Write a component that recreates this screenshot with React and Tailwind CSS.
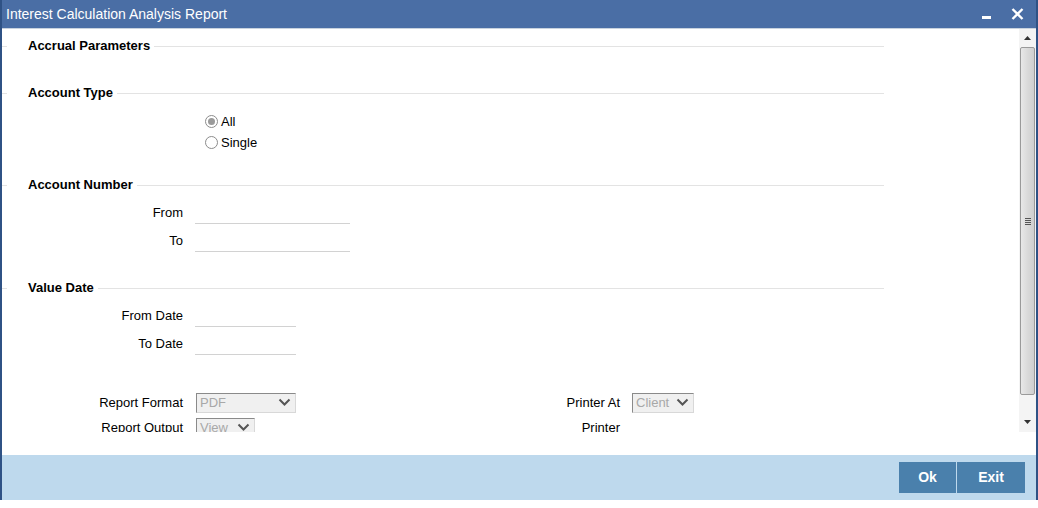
import { Fragment } from "react";

function Legend({ title }) {
  return (
    <div className="flex h-[20px] w-[882px] items-center">
      <div className="w-[5px] border-t border-[#e3e3e3]" />
      <span className="ml-[21px] pr-[4px] text-[13px] font-bold text-black">{title}</span>
      <div className="flex-1 border-t border-[#e3e3e3]" />
    </div>
  );
}

function TextRow({ label, width }) {
  return (
    <div className="flex h-[28px] items-center">
      <div className="w-[181px] text-right text-[13px] text-black">{label}</div>
      <div className={`ml-[12px] h-[22px] border-b border-[#d2d2d2] ${width}`} />
    </div>
  );
}

function Select({ value, width }) {
  return (
    <div
      className={`flex h-[20px] items-center justify-between border border-t-[#8a8a8a] border-l-[#8a8a8a] border-r-[#d8d8d8] border-b-[#d8d8d8] bg-[#f0f0f0] pl-[3px] pr-[4px] ${width}`}
    >
      <span className="text-[13px] leading-none text-[#a8a8a8]">{value}</span>
      <svg width="13" height="9" viewBox="0 0 13 9">
        <path d="M1.5 1.5 L6.5 6.5 L11.5 1.5" fill="none" stroke="#555" strokeWidth="2" />
      </svg>
    </div>
  );
}

function Radio({ checked, label }) {
  return (
    <div className="flex h-[21px] items-center pl-[203px]">
      <span className="flex h-[13px] w-[13px] items-center justify-center rounded-full border border-[#8c8c8c] bg-white">
        {checked && <span className="h-[7px] w-[7px] rounded-full bg-[#9a9a9a]" />}
      </span>
      <span className="ml-[3px] text-[13px] text-black">{label}</span>
    </div>
  );
}

export default function App() {
  return (
    <div className="h-[508px] w-[1038px] bg-white font-['Liberation_Sans',Arial,sans-serif]">
      <div className="flex h-[500px] flex-col border-x-2 border-[#2f5285] bg-white">
        {/* title bar */}
        <div className="flex h-[28px] items-center justify-between bg-[#4a6ea5] pl-[4px] pr-[12px]">
          <span className="text-[14px] text-white">Interest Calculation Analysis Report</span>
          <div className="flex items-center gap-[20px]">
            <span className="mt-[6px] h-[3px] w-[9px] bg-white" />
            <svg width="13" height="12" viewBox="0 0 13 12">
              <path d="M1.5 1 L11.5 11 M11.5 1 L1.5 11" stroke="white" strokeWidth="2.4" />
            </svg>
          </div>
        </div>
        <div className="h-px bg-[#c8d2de]" />

        {/* content */}
        <div className="flex h-[403px] overflow-hidden">
          <div className="flex-1 pt-[7px]">
            <Legend title="Accrual Parameters" />
            <div className="mt-[27px]">
              <Legend title="Account Type" />
            </div>
            <div className="mt-[8px]">
              <Radio checked label="All" />
              <Radio label="Single" />
            </div>
            <div className="mt-[22px]">
              <Legend title="Account Number" />
            </div>
            <div className="mt-[4px]">
              <TextRow label="From" width="w-[155px]" />
              <TextRow label="To" width="w-[155px]" />
            </div>
            <div className="mt-[23px]">
              <Legend title="Value Date" />
            </div>
            <div className="mt-[4px]">
              <TextRow label="From Date" width="w-[101px]" />
              <TextRow label="To Date" width="w-[101px]" />
            </div>
            <div className="mt-[32px] grid grid-cols-[448px_1fr]">
              {[
                ["Report Format", "PDF", "w-[100px]", "Printer At", "Client", "w-[62px]"],
                ["Report Output", "View", "w-[59px]", "Printer", null, ""],
              ].map(([l1, v1, w1, l2, v2, w2]) => (
                <Fragment key={l1}>
                  <div className="flex h-[25px] items-center">
                    <div className="w-[181px] text-right text-[13px] text-black">{l1}</div>
                    <div className="ml-[13px]">
                      <Select value={v1} width={w1} />
                    </div>
                  </div>
                  <div className="flex h-[25px] items-center">
                    <div className="w-[170px] text-right text-[13px] text-black">{l2}</div>
                    {v2 && (
                      <div className="ml-[12px]">
                        <Select value={v2} width={w2} />
                      </div>
                    )}
                  </div>
                </Fragment>
              ))}
            </div>
          </div>

          {/* scrollbar */}
          <div className="flex w-[17px] flex-col items-center bg-[#f4f4f4] pt-[2px] pb-[3px]">
            <div className="flex h-[14px] items-center justify-center">
              <svg width="7" height="4" viewBox="0 0 7 4">
                <path d="M0 4 L3.5 0 L7 4 Z" fill="#333" />
              </svg>
            </div>
            <div className="mt-[2px] flex h-[348px] w-[15px] items-center justify-center rounded-[2px] border border-[#9a9a9a] bg-gradient-to-r from-[#e8e8e8] via-[#dadada] to-[#cfcfcf]">
              <div className="flex flex-col gap-[1px]">
                <span className="h-px w-[6px] bg-[#555]" />
                <span className="h-px w-[6px] bg-[#555]" />
                <span className="h-px w-[6px] bg-[#555]" />
                <span className="h-px w-[6px] bg-[#555]" />
              </div>
            </div>
            <div className="flex-1" />
            <div className="flex h-[14px] items-center justify-center">
              <svg width="7" height="4" viewBox="0 0 7 4">
                <path d="M0 0 L3.5 4 L7 0 Z" fill="#333" />
              </svg>
            </div>
          </div>
        </div>

        <div className="h-[23px]" />

        {/* footer */}
        <div className="flex flex-1 items-center justify-end bg-[#bed9ed] pr-[11px]">
          <div className="flex h-[31px] gap-px">
            <button className="w-[57px] bg-[#4a80ac] text-[14px] font-bold text-white">Ok</button>
            <button className="w-[68px] bg-[#4a80ac] text-[14px] font-bold text-white">Exit</button>
          </div>
        </div>
      </div>
    </div>
  );
}
